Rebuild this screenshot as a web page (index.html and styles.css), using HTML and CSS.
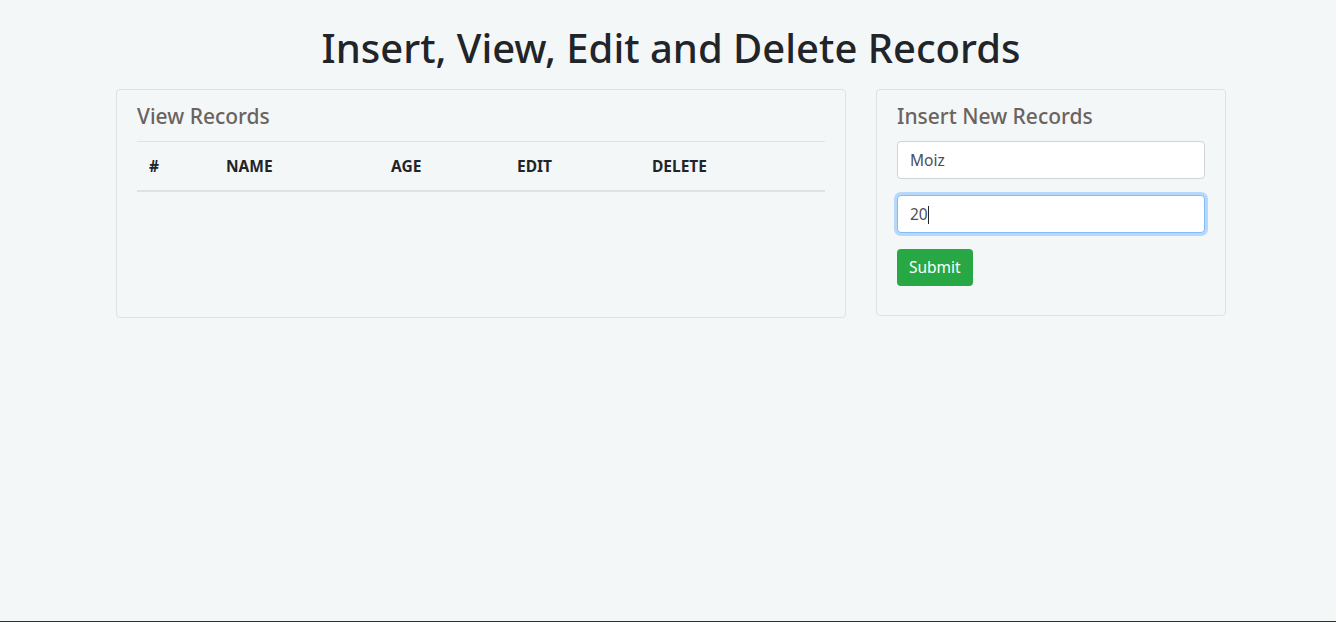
FILE: index.html
```html
<!DOCTYPE html>
<html>
<head>
<meta charset="utf-8">
<link rel="stylesheet" href="styles.css">
</head>
<body>
<h1 class="title">Insert, View, Edit and Delete Records</h1>
<div class="row">
  <div class="card card-view">
    <h4 class="card-title">View Records</h4>
    <table class="table">
      <thead>
        <tr>
          <th class="c1">#</th>
          <th class="c2">NAME</th>
          <th class="c3">AGE</th>
          <th class="c4">EDIT</th>
          <th class="c5">DELETE</th>
        </tr>
      </thead>
      <tbody></tbody>
    </table>
  </div>
  <div class="card card-insert">
    <h4 class="card-title">Insert New Records</h4>
    <form class="form">
      <div class="input">Moiz</div>
      <div class="input focus">20<span class="caret"></span></div>
      <div><span class="btn">Submit</span></div>
    </form>
  </div>
</div>
<div class="bottom-line"></div>
</body>
</html>
```
FILE: styles.css
```css
html, body { margin: 0; padding: 0; }
body {
  background: #f4f7f8;
  font-family: "Noto Sans", "Open Sans", sans-serif;
  color: #212529;
  height: 622px;
  position: relative;
  overflow: hidden;
}
.title {
  margin: 0 0 22px;
  padding-top: 22px;
  height: 67px;
  box-sizing: border-box;
  text-align: center;
  font-weight: 500;
  font-size: 40px;
  line-height: 52px;
  padding-left: 6px;
}
.row {
  display: flex;
  gap: 30px;
  padding-left: 116px;
  align-items: flex-start;
}
.card {
  border: 1px solid #dee2e6;
  border-radius: 4px;
  box-sizing: border-box;
  padding: 12px 20px 20px;
}
.card-view { width: 730px; height: 229px; }
.card-insert { width: 350px; height: 227px; }
.card-title {
  margin: 0;
  font-size: 21px;
  font-weight: 500;
  color: #6b6360;
  line-height: 29px;
  height: 40px;
  border-bottom: 1px solid #dee2e6;
  box-sizing: border-box;
}
.card-insert .card-title { border-bottom: none; height: 39px; }
.table {
  width: 100%;
  border-collapse: collapse;
}
.table th {
  text-align: left;
  font-size: 15.5px;
  font-weight: 700;
  padding: 11px 12px 12px;
  height: 49px;
  box-sizing: border-box;
  border-bottom: 2px solid #dee2e6;
  color: #212529;
}
.c1 { width: 77px; }
.c2 { width: 165px; }
.c3 { width: 126px; }
.c4 { width: 135px; }
.form { display: flex; flex-direction: column; gap: 16px; }
.input {
  height: 38px;
  box-sizing: border-box;
  border: 1px solid #ced4da;
  border-radius: 4px;
  background: #fff;
  padding: 0 12px;
  font-size: 15.5px;
  line-height: 36px;
  color: #495057;
}
.input.focus {
  border-color: #80bdff;
  box-shadow: 0 0 0 3px rgba(0,123,255,.25);
}
.caret {
  display: inline-block;
  width: 1px;
  height: 18px;
  background: #212529;
  vertical-align: -4px;
}
.btn {
  display: inline-block;
  background: #28a745;
  color: #fff;
  border-radius: 4px;
  height: 37px;
  line-height: 37px;
  padding: 0 12px;
  font-size: 15.5px;
}
.bottom-line {
  position: absolute;
  left: 0; right: 0; bottom: 0;
  height: 1px;
  background: #2b313a;
}
```
